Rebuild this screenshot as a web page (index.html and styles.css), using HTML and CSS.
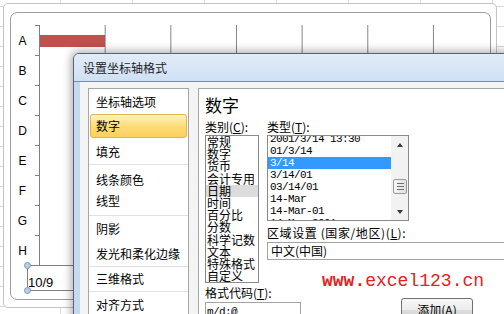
FILE: index.html
```html
<!DOCTYPE html>
<html lang="zh-CN">
<head>
<meta charset="utf-8">
<title>设置坐标轴格式</title>
<link rel="stylesheet" href="styles.css">
</head>
<body>
<div class="sheet">
  <div class="frame">
    <div class="chart">
      <div class="plotrow">
        <div class="labels">
          <div class="lab">A</div><div class="lab">B</div><div class="lab">C</div><div class="lab">D</div>
          <div class="lab">E</div><div class="lab">F</div><div class="lab">G</div><div class="lab">H</div>
        </div>
        <div class="plot">
          <div class="bar" style="width:65px"></div>
        </div>
      </div>
      <div class="xlabels">10/9</div>
    </div>
  </div>

  <div class="dialog">
    <div class="titlebar">设置坐标轴格式</div>
    <div class="body">
      <div class="nav">
        <div class="group">
          <div class="item">坐标轴选项</div>
          <div class="item sel">数字</div>
          <div class="item">填充</div>
        </div>
        <div class="group tight">
          <div class="item">线条颜色</div>
          <div class="item">线型</div>
        </div>
        <div class="group">
          <div class="item">阴影</div>
          <div class="item">发光和柔化边缘</div>
        </div>
        <div class="group short">
          <div class="item">三维格式</div>
        </div>
        <div class="group">
          <div class="item">对齐方式</div>
        </div>
      </div>
      <div class="panel">
        <div class="heading">数字</div>
        <div class="cols">
          <div class="catcol">
            <div class="lbl">类别(<u>C</u>):</div>
            <div class="catlist">
              <div>常规</div><div>数字</div><div>货币</div><div>会计专用</div>
              <div class="cur">日期</div><div>时间</div><div>百分比</div><div>分数</div>
              <div>科学记数</div><div>文本</div><div>特殊格式</div><div>自定义</div>
            </div>
          </div>
          <div class="typecol">
            <div class="lbl">类型(<u>T</u>):</div>
            <div class="typelist">
              <div class="types">
                <div>2001/3/14 13:30</div>
                <div>01/3/14</div>
                <div class="hl">3/14</div>
                <div>3/14/01</div>
                <div>03/14/01</div>
                <div>14-Mar</div>
                <div>14-Mar-01</div>
                <div>14-Mar-2001</div>
              </div>
              <div class="scroll">
                <div class="sarrow"></div>
                <div class="strack"><div class="thumb"><i></i><i></i><i></i></div></div>
                <div class="sarrow down"></div>
              </div>
            </div>
            <div class="region">区域设置 (国家/地区)(<u>L</u>):</div>
            <div class="combo">中文(中国)</div>
          </div>
        </div>
        <div class="coderow">
          <div class="codecol">
            <div class="lbl">格式代码(<u>T</u>):</div>
            <div class="input">m/d;@</div>
          </div>
          <div class="btn">添加(<u>A</u>)</div>
        </div>
      </div>
    </div>
  </div>

  <div class="watermark"><b>www.</b>excel123.cn</div>
</div>
</body>
</html>
```
FILE: styles.css
```css
body {
  margin: 0;
}

.sheet {
  position: relative;
  width: 504px;
  height: 314px;
  box-sizing: border-box;
  padding: 3px 0 0 3px;
  overflow: hidden;
  background-color: #fff;
  background-image:
    linear-gradient(to right, #dadada 1px, transparent 1px),
    linear-gradient(to bottom, #dadada 1px, transparent 1px);
  background-size: 72px 20px;
  background-position: 60px 0, 0 6px;
}

/* chart */
.frame {
  width: 494px;
  height: 305px;
  box-sizing: border-box;
  border: 1px solid #c4c4c4;
  border-radius: 5px;
  background: #fff;
  padding: 8px 0 0 6px;
}

.chart {
  width: 481px;
  height: 288px;
  box-sizing: border-box;
  border: 1px solid #9c9c9c;
  border-radius: 7px;
  padding-top: 12px;
  font-family: "Liberation Sans", Arial, sans-serif;
}

.plotrow {
  display: flex;
}

.labels {
  width: 28px;
  height: 241px;
  box-sizing: border-box;
  padding-top: 1px;
  background-image: repeating-linear-gradient(to bottom, #808080 0 1px, transparent 1px 30px);
  background-size: 4px 241px;
  background-position: right top;
  background-repeat: no-repeat;
}

.lab {
  height: 30px;
  line-height: 30px;
  padding-right: 5px;
  text-align: center;
  font-size: 12px;
  color: #000;
}

.plot {
  flex: 1;
  height: 240px;
  border-left: 1px solid #808080;
  border-bottom: 1px solid #808080;
  background-image: linear-gradient(to right, transparent 65px, #868686 65px, #868686 66px, transparent 66px);
  background-size: 65.67px 100%;
}

.bar {
  height: 12px;
  margin-top: 10px;
  background: #c0504d;
}

.xlabels {
  position: relative;
  margin: -1px 0 0 16px;
  height: 26px;
  box-sizing: border-box;
  border: 1px solid #808080;
  border-right: none;
  padding-top: 10px;
  font-size: 13px;
  line-height: 14px;
  color: #000;
}

.xlabels::before,
.xlabels::after {
  content: "";
  position: absolute;
  left: -4px;
  width: 7px;
  height: 7px;
  box-sizing: border-box;
  border-radius: 50%;
  background: #b9cde3;
  border: 1px solid #7d98b6;
}

.xlabels::before { top: -4px; }
.xlabels::after { bottom: -4px; }

/* dialog */
.dialog {
  position: absolute;
  left: 73px;
  top: 53px;
  width: 440px;
  height: 270px;
  display: flex;
  flex-direction: column;
  border: 1px solid #56657a;
  border-radius: 6px 6px 0 0;
  background: #c5d9f0;
  box-shadow: 0 0 8px 2px rgba(0, 0, 0, 0.32);
  font-family: "Noto Sans CJK SC", "Noto Sans", sans-serif;
  font-size: 12px;
  color: #000;
}

.titlebar {
  height: 27px;
  line-height: 27px;
  padding-left: 9px;
  border-bottom: 1px solid #7b8ea6;
  border-radius: 5px 5px 0 0;
  background: linear-gradient(to bottom, #e2ecf8, #cfe0f4);
  color: #1d1d1d;
}

.body {
  flex: 1;
  display: flex;
  align-items: flex-start;
  margin-left: 6px;
  padding: 6px 0 0 8px;
  background: #f4f4f4;
}

.nav {
  width: 101px;
  height: 260px;
  flex: none;
  box-sizing: border-box;
  border: 1px solid #a7a7a7;
  background: #fff;
}

.group + .group {
  border-top: 1px solid #e2e2e2;
}

.item {
  height: 25px;
  line-height: 25px;
  padding-left: 7px;
  white-space: nowrap;
}

.group.tight {
  padding: 4px 0;
}

.group.tight .item {
  height: 21px;
  line-height: 21px;
}

.group.short .item {
  height: 24px;
  line-height: 24px;
}

.item.sel {
  margin: 0 1px 1px;
  height: 24px;
  line-height: 22px;
  box-sizing: border-box;
  padding-left: 5px;
  border: 1px solid #e2b54b;
  border-radius: 3px;
  background: linear-gradient(to bottom, #fff3bd, #fddb74 55%, #fcd05c);
}

.panel {
  flex: 1;
  height: 240px;
  margin-left: 9px;
  padding: 5px 0 0 6px;
  border-left: 1px solid #a7a7a7;
  border-top: 1px solid #a7a7a7;
  background: #fff;
}

.heading {
  height: 22px;
  font-size: 17px;
  line-height: 22px;
}

.cols {
  display: flex;
  gap: 8px;
  margin-top: 3px;
}

.lbl {
  height: 15px;
  line-height: 15px;
  white-space: nowrap;
}

.catcol {
  width: 54px;
  flex: none;
}

.catlist {
  margin-top: 1px;
  height: 148px;
  box-sizing: border-box;
  border: 1px solid #8a8a8a;
  overflow: hidden;
  background: #fff;
}

.catlist div {
  height: 12.2px;
  line-height: 12.2px;
  padding-left: 1px;
  white-space: nowrap;
}

.catlist .cur {
  background: #dcdcdc;
}

.typecol {
  width: 142px;
  flex: none;
}

.typelist {
  display: flex;
  margin-top: 1px;
  height: 86px;
  box-sizing: border-box;
  border: 1px solid #8a8a8a;
  background: #fff;
}

.types {
  flex: 1;
  overflow: hidden;
  font-family: "Liberation Mono", monospace;
  font-size: 11px;
  letter-spacing: -0.6px;
}

.types div {
  height: 12px;
  line-height: 12px;
  padding-left: 2px;
  white-space: nowrap;
}

.types div:first-child {
  margin-top: -3px;
}

.types .hl {
  background: #3399ff;
  color: #fff;
}

.scroll {
  width: 17px;
  flex: none;
  display: flex;
  flex-direction: column;
  background: #f2f2f2;
}

.sarrow {
  height: 17px;
  display: flex;
  align-items: center;
  justify-content: center;
}

.sarrow::before {
  content: "";
  border-left: 3.5px solid transparent;
  border-right: 3.5px solid transparent;
  border-bottom: 4px solid #3a3a3a;
}

.sarrow.down::before {
  border-bottom: none;
  border-top: 4px solid #3a3a3a;
}

.strack {
  flex: 1;
}

.thumb {
  margin: 26px 1px 0 2px;
  height: 15px;
  box-sizing: border-box;
  display: flex;
  flex-direction: column;
  align-items: center;
  justify-content: center;
  gap: 2px;
  border: 1px solid #9a9a9a;
  border-radius: 2px;
  background: linear-gradient(to right, #f6f6f6, #e0e0e0);
}

.thumb i {
  display: block;
  width: 7px;
  height: 1px;
  background: #6f6f6f;
}

.region {
  margin-top: 5px;
  height: 14px;
  line-height: 14px;
  letter-spacing: 0.6px;
  white-space: nowrap;
}

.combo {
  margin-top: 2px;
  width: 300px;
  height: 18px;
  box-sizing: border-box;
  padding-left: 3px;
  border: 1px solid #a3a3a3;
  line-height: 16px;
  background: #fff;
}

.coderow {
  display: flex;
  align-items: flex-start;
  margin-top: 3px;
}

.codecol {
  width: 96px;
  flex: none;
}

.codecol .lbl {
  height: 14px;
  line-height: 14px;
}

.input {
  margin-top: 2px;
  height: 20px;
  box-sizing: border-box;
  padding-left: 1px;
  border: 1px solid #a3a3a3;
  font-family: "Liberation Mono", monospace;
  font-size: 11px;
  letter-spacing: -0.6px;
  line-height: 18px;
}

.btn {
  margin: 12px 0 0 100px;
  width: 72px;
  height: 24px;
  flex: none;
  box-sizing: border-box;
  border: 1px solid #707070;
  border-radius: 3px;
  background: linear-gradient(to bottom, #f7f7f7, #ececec 50%, #dddddd 51%, #d0d0d0);
  text-align: center;
  line-height: 22px;
}

.watermark {
  position: absolute;
  left: 322px;
  top: 271px;
  font-family: "Liberation Mono", monospace;
  font-size: 18px;
  line-height: 20px;
  color: #e42020;
  white-space: nowrap;
}
```
